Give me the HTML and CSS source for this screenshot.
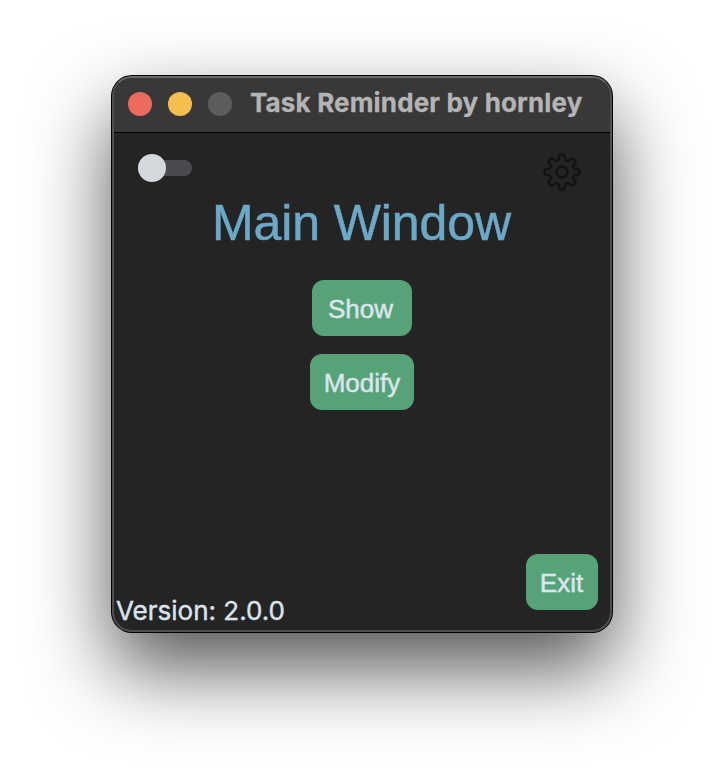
FILE: index.html
```html
<!DOCTYPE html>
<html lang="en">
<head>
<meta charset="utf-8">
<title>Task Reminder by hornley</title>
<link rel="stylesheet" href="styles.css">
</head>
<body>
<main class="window">
  <header class="titlebar">
    <span class="light close"></span>
    <span class="light minimize"></span>
    <span class="light disabled"></span>
    <span class="title">Task Reminder by hornley</span>
  </header>
  <section class="content">
    <div class="toolbar">
      <div class="switch"><span class="knob"></span></div>
      <svg class="gear" viewBox="-20 -20 40 40" fill="none" stroke="#131313" stroke-width="2.5" stroke-linejoin="round">
        <circle r="5.6"/>
        <path d="M-3.2-12.2L-2.8-15.8Q-2.5-17.4-1-17.4H1Q2.5-17.4 2.8-15.8L3.2-12.2Q4.8-10.8 6.6-11.1L9.2-13.2Q10.5-14 11.6-12.9L12.9-11.6Q14-10.5 13.2-9.2L11.1-6.6Q10.8-4.8 12.2-3.2L15.8-2.8Q17.4-2.5 17.4-1V1Q17.4 2.5 15.8 2.8L12.2 3.2Q10.8 4.8 11.1 6.6L13.2 9.2Q14 10.5 12.9 11.6L11.6 12.9Q10.5 14 9.2 13.2L6.6 11.1Q4.8 10.8 3.2 12.2L2.8 15.8Q2.5 17.4 1 17.4H-1Q-2.5 17.4-2.8 15.8L-3.2 12.2Q-4.8 10.8-6.6 11.1L-9.2 13.2Q-10.5 14-11.6 12.9L-12.9 11.6Q-14 10.5-13.2 9.2L-11.1 6.6Q-10.8 4.8-12.2 3.2L-15.8 2.8Q-17.4 2.5-17.4 1V-1Q-17.4-2.5-15.8-2.8L-12.2-3.2Q-10.8-4.8-11.1-6.6L-13.2-9.2Q-14-10.5-12.9-11.6L-11.6-12.9Q-10.5-14-9.2-13.2L-6.6-11.1Q-4.8-10.8-3.2-12.2Z"/>
      </svg>
    </div>
    <h1>Main Window</h1>
    <div class="actions">
      <button class="show">Show</button>
      <button class="modify">Modify</button>
    </div>
    <footer>
      <span class="version">Version: 2.0.0</span>
      <button class="exit">Exit</button>
    </footer>
  </section>
</main>
</body>
</html>
```
FILE: styles.css
```css
* { box-sizing: border-box; }
body {
  margin: 0;
  height: 780px;
  overflow: hidden;
  background: #fff;
  padding: 76px 112px;
}
.window {
  width: 500px;
  height: 556px;
  border: 2px solid #505050;
  border-top-color: #6b6b6b;
  border-radius: 20px;
  background: #242424;
  box-shadow: 0 0 0 1px #000, 0 36px 80px rgba(0, 0, 0, .68);
  display: flex;
  flex-direction: column;
}
.titlebar {
  height: 55px;
  flex: none;
  display: flex;
  align-items: center;
  padding: 0 0 2px 14px;
  gap: 16px;
  background: #383838;
  border-bottom: 1px solid #000;
  border-radius: 18px 18px 0 0;
}
.light { width: 24px; height: 24px; border-radius: 50%; }
.close { background: #ed6a5e; }
.minimize { background: #f5bf4f; }
.disabled { background: #5c5c5c; }
.title {
  font: 700 26px/32px Inter, sans-serif;
  letter-spacing: .16px;
  color: #b4b4b4;
  margin: -2px 0 0 2px;
  white-space: nowrap;
  -webkit-text-stroke: .3px #b4b4b4;
}
.content { flex: 1; display: flex; flex-direction: column; }
.toolbar {
  height: 60px;
  display: flex;
  justify-content: space-between;
  padding: 19px 28px 0 24px;
}
.switch {
  width: 54px;
  height: 16px;
  margin-top: 8px;
  border-radius: 8px;
  background: #4a4b50;
  display: flex;
  align-items: center;
}
.knob { width: 28px; height: 28px; flex: none; border-radius: 50%; background: #d5d9de; }
.gear { width: 40px; height: 40px; }
h1 {
  margin: 0;
  padding-right: 1px;
  font: 400 50px/60px "Liberation Sans", Arial, sans-serif;
  letter-spacing: -.1px;
  text-align: center;
  color: #6aaac8;
  -webkit-text-stroke: .5px #6aaac8;
}
.actions {
  display: flex;
  flex-direction: column;
  align-items: center;
  gap: 18px;
  margin-top: 27px;
}
button {
  height: 56px;
  border: 0;
  padding: 1px 0 0;
  border-radius: 12px;
  background: #56a377;
  color: #dce4ee;
  font: 400 26px/30px "Liberation Sans", Arial, sans-serif;
  -webkit-text-stroke: .5px #dce4ee;
}
.show { width: 100px; padding-right: 3px; }
.modify { width: 104px; }
.exit { width: 72px; padding-right: 1px; margin-bottom: 20px; }
footer {
  margin-top: auto;
  display: flex;
  align-items: flex-end;
  justify-content: space-between;
  padding: 0 12px 0 2px;
}
.version {
  font: 400 26px/32px Inter, sans-serif;
  color: #dce4ee;
  margin-bottom: 3px;
  -webkit-text-stroke: .4px #dce4ee;
}
```
